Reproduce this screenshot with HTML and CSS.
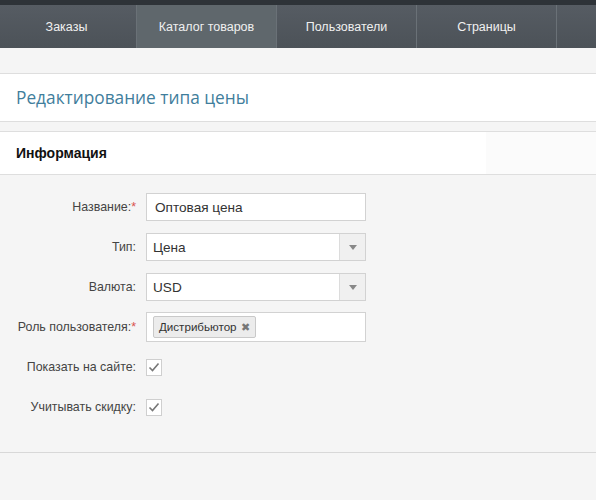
FILE: index.html
```html
<!DOCTYPE html>
<html lang="ru">
<head>
    <meta charset="UTF-8">
    <title>Редактирование типа цены</title>
    <link rel="stylesheet" href="styles.css">
</head>
<body>

    <div class="topline"></div>
    <nav class="menu">
        <a class="tab first" href="#">Заказы</a>
        <a class="tab active" href="#">Каталог товаров</a>
        <a class="tab" href="#">Пользователи</a>
        <a class="tab" href="#">Страницы</a>
        <a class="tab" href="#"></a>
    </nav>

    <div class="page-head">
        <h1>Редактирование типа цены</h1>
    </div>

    <div class="box-head">
        <h2>Информация</h2>
    </div>

    <form class="form">
        <div class="row">
            <label>Название:<span class="req">*</span></label>
            <input class="field" type="text" value="Оптовая цена">
        </div>
        <div class="row">
            <label>Тип:</label>
            <div class="select">
                <span>Цена</span>
                <span class="arrow"></span>
            </div>
        </div>
        <div class="row">
            <label>Валюта:</label>
            <div class="select">
                <span>USD</span>
                <span class="arrow"></span>
            </div>
        </div>
        <div class="row">
            <label>Роль пользователя:<span class="req">*</span></label>
            <div class="tags">
                <span class="tag">Дистрибьютор <span class="remove">&#x2716;</span></span>
            </div>
        </div>
        <div class="row">
            <label>Показать на сайте:</label>
            <span class="check">
                <svg width="12" height="10" viewBox="0 0 12 10"><path d="M1.5 5.5 L4.5 8.5 L10.5 1.5" fill="none" stroke="#777" stroke-width="1.6"/></svg>
            </span>
        </div>
        <div class="row">
            <label>Учитывать скидку:</label>
            <span class="check">
                <svg width="12" height="10" viewBox="0 0 12 10"><path d="M1.5 5.5 L4.5 8.5 L10.5 1.5" fill="none" stroke="#777" stroke-width="1.6"/></svg>
            </span>
        </div>
    </form>

</body>
</html>
```

FILE: styles.css
```css
* {
    box-sizing: border-box;
}

body {
    margin: 0;
    background-color: #f5f5f5;
    font-family: "Liberation Sans", Arial, sans-serif;
    font-size: 13px;
    color: #333;
}

.topline {
    height: 5px;
    background-color: #2e3338;
}

.menu {
    display: flex;
    height: 43px;
    background: linear-gradient(#565c63, #4c5258);
    overflow: hidden;
}

.menu .tab {
    flex: 0 0 140px;
    display: flex;
    align-items: center;
    justify-content: center;
    color: #f0f0f0;
    text-decoration: none;
    font-size: 12.5px;
    border-right: 1px solid #6a7177;
}

.menu .tab.first {
    margin-left: -3px;
}

.menu .tab.active {
    background: #5f676c;
}

.page-head {
    margin-top: 25px;
    background-color: #fff;
    border-top: 1px solid #dedede;
    border-bottom: 1px solid #dedede;
    height: 49px;
    display: flex;
    align-items: center;
    padding-left: 16px;
}

.page-head h1 {
    margin: 0;
    font-family: "Open Sans", sans-serif;
    font-weight: normal;
    font-size: 17.3px;
    color: #3f7e9c;
}

.box-head {
    margin-top: 9px;
    background: linear-gradient(to right, #fff 81.5%, #fbfbfb 81.5%);
    border-top: 1px solid #dedede;
    border-bottom: 1px solid #dedede;
    height: 44px;
    display: flex;
    align-items: center;
    padding-left: 16px;
}

.box-head h2 {
    margin: 0;
    font-size: 14px;
    font-weight: bold;
    color: #111;
}

.form {
    padding-top: 12px;
    height: 278px;
    border-bottom: 1px solid #d8d8d8;
}

.row {
    display: flex;
    align-items: center;
    height: 40px;
}

.row label {
    flex: 0 0 146px;
    padding-right: 10px;
    text-align: right;
    font-size: 12.4px;
    color: #444;
}

.row .req {
    color: #d9534f;
}

.field,
.select,
.tags {
    width: 220px;
    height: 28px;
    border: 1px solid #d2d2d2;
    background-color: #fff;
    font-family: "Liberation Sans", Arial, sans-serif;
    font-size: 13.6px;
    color: #333;
    padding: 0 8px;
}

.select {
    display: flex;
    align-items: center;
    justify-content: space-between;
    padding-right: 0;
    padding-left: 6px;
}

.select .arrow {
    width: 26px;
    height: 100%;
    background-color: #f0f0f0;
    border-left: 1px solid #dcdcdc;
    position: relative;
}

.select .arrow::after {
    content: "";
    position: absolute;
    left: 9px;
    top: 11px;
    border-left: 4px solid transparent;
    border-right: 4px solid transparent;
    border-top: 5px solid #888;
}

.tags {
    height: 30px;
    display: flex;
    align-items: center;
    padding: 0 6px;
}

.tag {
    background-color: #ececec;
    border: 1px solid #c9c9c9;
    border-radius: 2px;
    padding: 3px 5px;
    font-size: 11.6px;
    color: #333;
}

.tag .remove {
    color: #777;
    font-size: 11px;
    margin-left: 1px;
}

.check {
    width: 16px;
    height: 17px;
    border: 1px solid #cfcfcf;
    background-color: #fff;
    display: flex;
    align-items: center;
    justify-content: center;
}
```
